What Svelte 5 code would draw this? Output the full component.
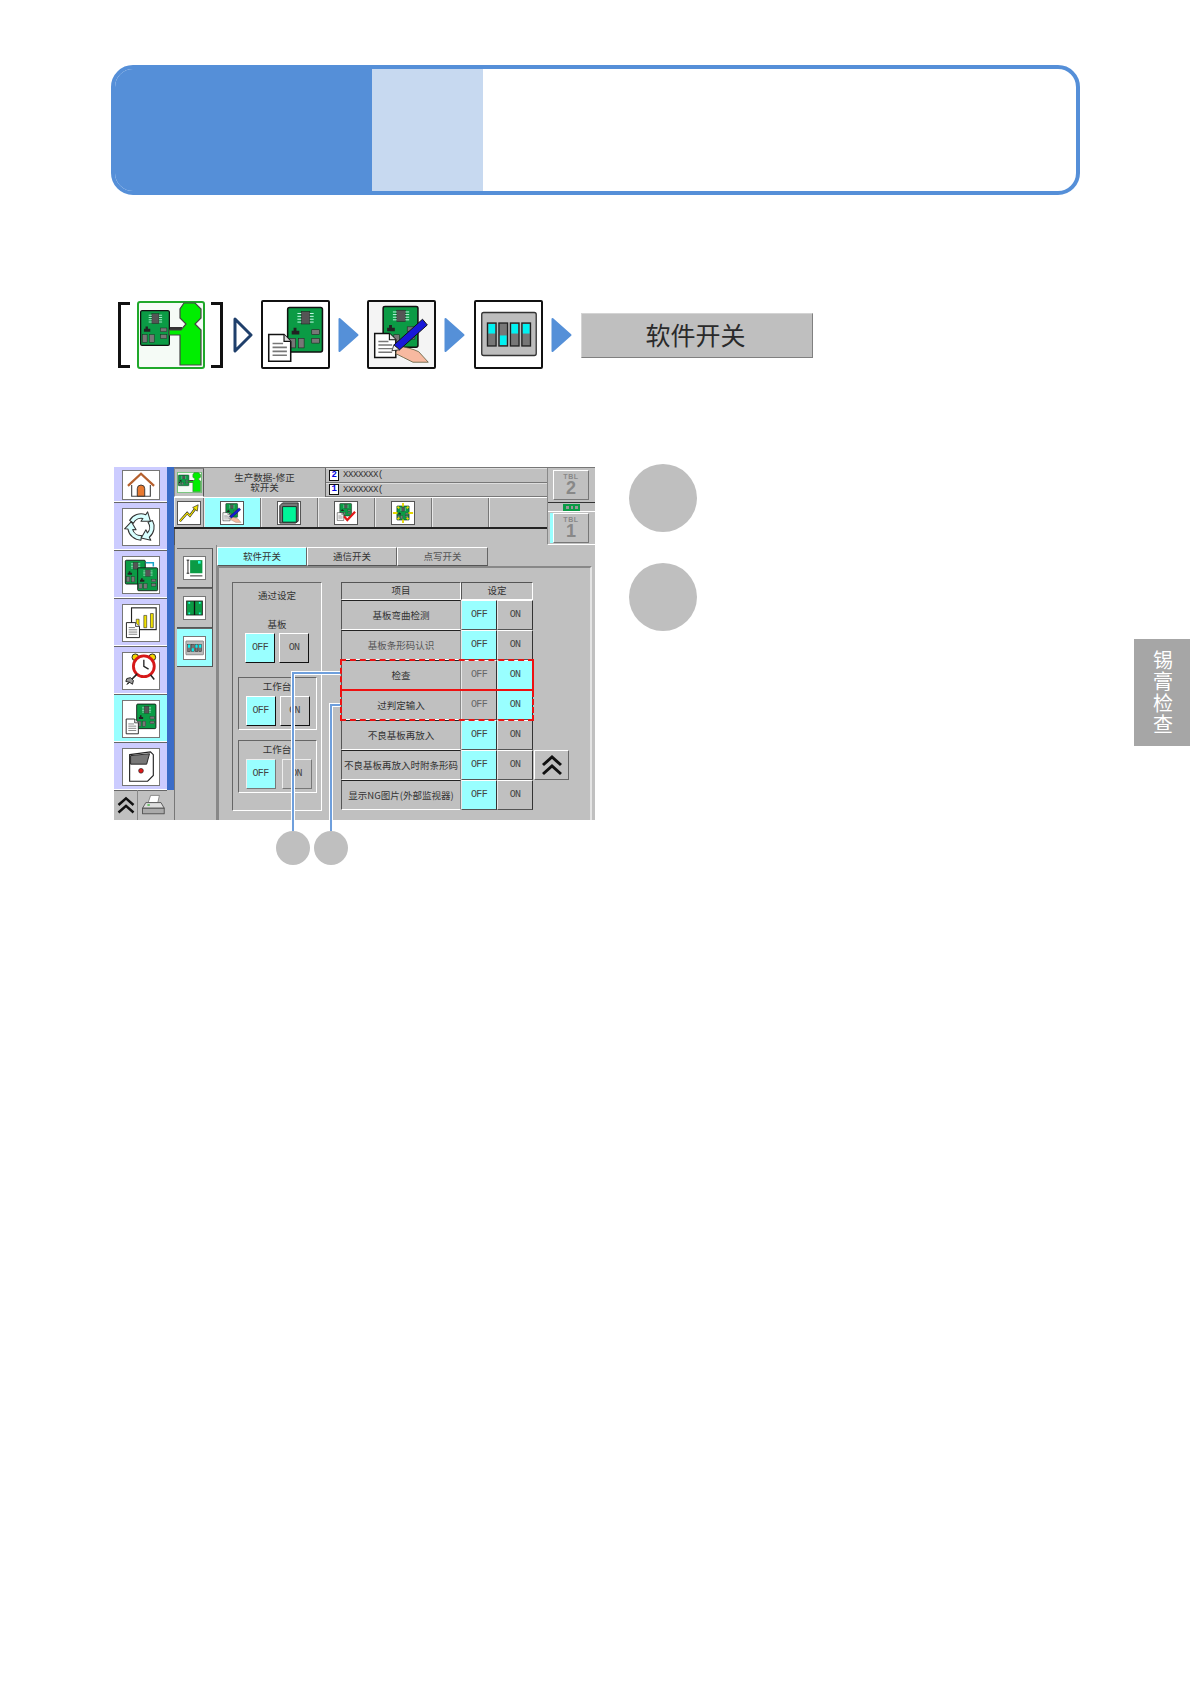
<script>
	const crumbIcons = ['boardDoc', 'edit', 'switches'];

	const rows = [
		{ label: '基板弯曲检测', on: false },
		{ label: '基板条形码认识', on: false },
		{ label: '检查', on: true },
		{ label: '过判定输入', on: true },
		{ label: '不良基板再放入', on: false },
		{ label: '不良基板再放入时附条形码', on: false },
		{ label: '显示NG图片(外部监视器)', on: false }
	];

	const tabs = ['软件开关', '通信开关', '点写开关'];
</script>

{#snippet board(x, y, w, h)}
	<g transform="translate({x} {y}) scale({w / 38} {h / 48})">
		<rect x="0.8" y="0.8" width="36.4" height="46.4" rx="2" fill="#0b9b45" stroke="#111" stroke-width="1.6" />
		<rect x="15" y="5" width="9" height="13" fill="#555" stroke="#222" stroke-width="0.6" />
		<path d="M11 7h4M11 10h4M11 13h4M11 16h4M24 7h4M24 10h4M24 13h4M24 16h4" stroke="#cfe" stroke-width="1" />
		<path d="M7 22h3v3h3v4h-8v-4h2z" fill="#222" />
		<rect x="3" y="33" width="6" height="10" fill="#777" stroke="#222" stroke-width="0.6" />
		<rect x="12" y="33" width="6" height="10" fill="#777" stroke="#222" stroke-width="0.6" />
		<rect x="26" y="24" width="8" height="5" fill="#777" stroke="#222" stroke-width="0.6" />
		<rect x="26" y="33" width="8" height="5" fill="#777" stroke="#222" stroke-width="0.6" />
	</g>
{/snippet}

{#snippet doc(x, y, w, h)}
	<g transform="translate({x} {y}) scale({w / 25} {h / 29})">
		<path d="M1 1h16l7 7v20h-23z" fill="#fff" stroke="#111" stroke-width="1.6" />
		<path d="M17 1v7h7" fill="#ddd" stroke="#111" stroke-width="1.2" />
		<path d="M5 10h11M5 14h15M5 18h15M5 22h15" stroke="#777" stroke-width="1.6" />
	</g>
{/snippet}

{#snippet personBoard()}
	<rect x="1" y="1" width="66" height="66" rx="2" fill="#f5fbf6" stroke="#1fa82a" stroke-width="2" />
	{@render board(3, 9, 30, 36)}
	<path d="M33 26h12v8h-12z" fill="#333" />
	<path d="M47 2h11l6 6v9l-6 6 6 6v35h-21v-30h-11v-5h12l5-6-6-6v-9z" fill="#00ee00" stroke="#444" stroke-width="1.2" />
{/snippet}

{#snippet boardDoc()}
	{@render board(25, 5, 38, 48)}
	{@render doc(5, 33, 25, 30)}
{/snippet}

{#snippet edit()}
	{@render board(14, 4, 38, 44)}
	{@render doc(5, 32, 24, 27)}
	<path d="M30 46c8 1 16 3 22 6l10 11h-16l-10-5-8-4z" fill="#f7b9a0" stroke="#553" stroke-width="0.8" />
	<path d="M56 18l5 6-29 26-6-5z" fill="#1818d8" stroke="#111" stroke-width="1" />
	<path d="M26 45l6 5-8 1z" fill="#eee" stroke="#111" stroke-width="0.8" />
{/snippet}

{#snippet switches()}
	<rect x="6" y="11" width="57" height="45" rx="2" fill="#bdbdbd" stroke="#333" stroke-width="1.4" />
	{#each [0, 1, 2, 3] as i}
		<rect x={12 + i * 12} y="22" width="9" height="24" fill="#777" stroke="#222" stroke-width="1.4" />
		<rect x={13 + i * 12} y={i === 1 ? 35 : 23} width="7" height="10" fill="#00f2f2" />
	{/each}
{/snippet}

{#snippet swirl(angle)}
	<g transform="rotate({angle} 19 19)">
		<path d="M7 12A14 14 0 0 1 24 6l2-3 3 10-10 0 2-3a9 9 0 0 0-10 5z" fill="#d8ffff" stroke="#333" stroke-width="1.100" stroke-linejoin="round" />
	</g>
{/snippet}

{#snippet chevrons(color = '#111')}
	<svg class="chev" viewBox="0 0 24 24" aria-hidden="true">
		<path d="M3 12l9-8 9 8M3 21l9-8 9 8" fill="none" stroke={color} stroke-width="3" />
	</svg>
{/snippet}

<div class="page">
	<div class="banner">
		<div class="banner-dark"></div>
		<div class="banner-light"></div>
	</div>

	<div class="crumbs">
		<span class="bracket"></span>
		<svg class="crumb" viewBox="0 0 68 68" aria-hidden="true">{@render personBoard()}</svg>
		<span class="bracket right"></span>
		<svg class="arrow first" viewBox="0 0 21 36" aria-hidden="true"><path d="M2 2l16 16-16 16z" fill="#fff" stroke="#1f3f6b" stroke-width="3" stroke-linejoin="round" /></svg>
		{#each crumbIcons as name}
			<div class="crumb framed" class:grey={name === 'edit'} class:last={name === 'switches'}>
				<svg viewBox="0 0 68 68" aria-hidden="true">
					{#if name === 'boardDoc'}{@render boardDoc()}{:else if name === 'edit'}{@render edit()}{:else}{@render switches()}{/if}
				</svg>
			</div>
			<svg class="arrow" viewBox="0 0 21 36" aria-hidden="true"><path d="M1.5 2l18 16-18 16z" fill="#5590d8" stroke="#5590d8" stroke-width="2" stroke-linejoin="round" /></svg>
		{/each}
		<div class="crumb-label">软件开关</div>
	</div>

	<div class="figure-row">
		<div class="figure">
			<div class="screen">
				<div class="nav">
					<div class="nav-list">
						<div class="nav-item home">
							<div class="nav-box short">
								<svg viewBox="0 0 38 30" aria-hidden="true">
									<path d="M5 16L19 3l14 13" fill="none" stroke="#b5602d" stroke-width="2.4" />
									<path d="M9 15v12h20V15" fill="#fff" stroke="#444" stroke-width="1.2" />
									<path d="M15 27V19a4 4 0 0 1 8 0v8z" fill="#e8792f" stroke="#333" />
								</svg>
							</div>
						</div>
						<div class="nav-item">
							<div class="nav-box">
								<svg viewBox="0 0 38 38" aria-hidden="true">
									{@render swirl(0)}
									{@render swirl(120)}
									{@render swirl(240)}
								</svg>
							</div>
						</div>
						<div class="nav-item">
							<div class="nav-box">
								<svg viewBox="0 0 38 38" aria-hidden="true">
									{@render board(2, 3, 22, 26)}
									{@render board(15, 11, 22, 25)}
									<path d="M24 6h8v4" fill="none" stroke="#1aa7c9" stroke-width="1.6" />
								</svg>
							</div>
						</div>
						<div class="nav-item">
							<div class="nav-box">
								<svg viewBox="0 0 38 38" aria-hidden="true">
									<rect x="9" y="3" width="26" height="23" fill="#fff" stroke="#222" stroke-width="1.2" />
									<path d="M14 24V15h3v9zM22 24V11h3v13zM29 24V9h3v15z" fill="#f2e200" stroke="#222" stroke-width="0.6" />
									{@render doc(3, 18, 15, 17)}
								</svg>
							</div>
						</div>
						<div class="nav-item">
							<div class="nav-box">
								<svg viewBox="0 0 38 38" aria-hidden="true">
									<circle cx="13" cy="4.500" r="3.500" fill="#f2d400" stroke="#222" />
									<circle cx="31" cy="4.500" r="3.500" fill="#f2d400" stroke="#222" />
									<circle cx="22" cy="14" r="11" fill="#fff" stroke="#d61818" stroke-width="3" />
									<path d="M22 7v7l5 3" fill="none" stroke="#222" stroke-width="1.4" />
									<path d="M15 22L8 29M29 23l4 5" stroke="#222" stroke-width="1.6" />
									<path d="M4 27l4-1 3 3-1 4-3-2-3 2 3-2-4-1z" fill="#999" stroke="#222" />
								</svg>
							</div>
						</div>
						<div class="nav-item active">
							<div class="nav-box">
								<svg viewBox="0 0 68 68" aria-hidden="true">{@render boardDoc()}</svg>
							</div>
						</div>
						<div class="nav-item">
							<div class="nav-box">
								<svg viewBox="0 0 38 38" aria-hidden="true">
									<path d="M7 6l22-3 3 3v22l-6 6H7z" fill="#fff" stroke="#222" stroke-width="1.2" />
									<path d="M8 7l20-2-3 11H8z" fill="#777" stroke="#222" />
									<circle cx="19" cy="23" r="2.500" fill="#e01818" stroke="#222" stroke-width="0.7" />
								</svg>
							</div>
						</div>
					</div>
					<div class="nav-foot">
						<div class="foot-scroll">{@render chevrons()}</div>
						<div class="foot-print">
							<svg viewBox="0 0 30 26" aria-hidden="true">
								<path d="M12 1h11l-2 9H9z" fill="#fff" stroke="#777" />
								<path d="M6 10h19l4 7H2z" fill="#ddd" stroke="#444" />
								<rect x="2" y="17" width="27" height="7" fill="#aaa" stroke="#444" />
								<path d="M8 13h3" stroke="#2a2" stroke-width="1.500" />
							</svg>
						</div>
					</div>
				</div>

				<div class="main">
					<div class="top">
						<div class="top-left">
							<div class="title-row">
								<div class="title-icon">
									<svg viewBox="0 0 68 68" preserveAspectRatio="none" aria-hidden="true">{@render personBoard()}</svg>
								</div>
								<div class="title-text">生产数据-修正<br />软开关</div>
								<div class="files">
									<div class="file"><b>2</b><span>XXXXXXX(</span></div>
									<div class="file"><b>1</b><span>XXXXXXX(</span></div>
								</div>
							</div>
							<div class="tool-row">
								<div class="tool graph">
									<svg class="tool-box" viewBox="0 0 24 24" aria-hidden="true">
										<path d="M2 21l8-9 3 3 6-8" fill="none" stroke="#222" stroke-width="2.600" />
										<path d="M2 21l8-9 3 3 6-8" fill="none" stroke="#f4e400" stroke-width="1.300" />
										<path d="M22 3l-1 7-5-4z" fill="#f4e400" stroke="#222" stroke-width="0.7" />
									</svg>
								</div>
								<div class="tool active">
									<svg class="tool-box" viewBox="0 0 68 68" aria-hidden="true">{@render edit()}</svg>
								</div>
								<div class="tool">
									<svg class="tool-box" viewBox="0 0 24 24" aria-hidden="true">
										<path d="M2 4l3-3h17v20l-3 2H2z" fill="#777" stroke="#222" />
										<path d="M5 5h15v17H5z" fill="#00f598" stroke="#222" />
									</svg>
								</div>
								<div class="tool">
									<svg class="tool-box" viewBox="0 0 68 68" aria-hidden="true">
										{@render board(14, 4, 38, 40)}
										{@render doc(6, 32, 22, 26)}
										<path d="M28 44l10 12 24-26" fill="none" stroke="#e01818" stroke-width="7" />
									</svg>
								</div>
								<div class="tool">
									<svg class="tool-box" viewBox="0 0 24 24" aria-hidden="true">
										{@render board(5, 4, 14, 16)}
										<path d="M12 1v4M12 19v4M1 12h5M18 12h5M6 5l2 2M18 5l-2 2M6 19l2-2M18 19l-2-2" stroke="#e6d800" stroke-width="2" />
									</svg>
								</div>
								<div class="tool"></div>
								<div class="tool last"></div>
							</div>
							<div class="band"></div>
						</div>
						<div class="tbl-col">
							<div class="tbl"><small>TBL</small><strong>2</strong></div>
							<div class="tbl-strip"><svg viewBox="0 0 17 7" aria-hidden="true"><rect width="17" height="7" fill="#0b9b45" /><path d="M3 2h3v3H3zM8 2h2v3H8zM12 2h3v3h-3z" fill="#999" /></svg></div>
							<div class="tbl-wrap">
								<div class="tbl"><small>TBL</small><strong>1</strong></div>
							</div>
						</div>
					</div>

					<div class="body">
						<div class="side">
							<div class="side-tab">
								<svg class="side-box" viewBox="0 0 24 24" aria-hidden="true">
									<rect x="7" y="3" width="14" height="15" fill="#0b9b45" />
									<rect x="16" y="4" width="3" height="3" fill="#2fd" />
									<path d="M3 3h3M4.500 3v15M3 18h3M7 21h14" stroke="#111" />
								</svg>
							</div>
							<div class="side-tab">
								<svg class="side-box" viewBox="0 0 24 24" aria-hidden="true">
									<rect x="3" y="4" width="18" height="16" fill="#0b9b45" stroke="#222" />
									<path d="M12 4v16" stroke="#111" stroke-width="1.500" />
									<path d="M5 5h2v2H5zM17 5h2v2h-2zM5 17h2v2H5zM17 17h2v2h-2z" fill="#2fd" />
								</svg>
							</div>
							<div class="side-tab active">
								<svg class="side-box" viewBox="0 0 68 68" aria-hidden="true">{@render switches()}</svg>
							</div>
						</div>

						<div class="content">
							<div class="tabs">
								{#each tabs as tab, i}
									<div class="tab" class:active={i === 0} class:dim={i === 2}>{tab}</div>
								{/each}
							</div>
							<div class="panel">
								<div class="pass">
									<div class="pass-title">通过设定</div>
									<div class="pass-sub">基板</div>
									<div class="btns">
										<div class="btn on">OFF</div>
										<div class="btn">ON</div>
									</div>
									<div class="stage">
										<div class="stage-title">工作台</div>
										<div class="btns">
											<div class="btn on">OFF</div>
											<div class="btn">ON</div>
										</div>
									</div>
									<div class="stage">
										<div class="stage-title">工作台</div>
										<div class="btns wide">
											<div class="btn on soft">OFF</div>
											<div class="btn soft">ON</div>
										</div>
									</div>
								</div>

								<div class="table">
									<div class="head c1">项目</div>
									<div class="head set">设定</div>
									{#each rows as row, i}
										<div class="label c1" class:dim={i === 1} style="grid-row:{i + 2}">{row.label}</div>
										<div class="cell c2" class:on={!row.on} class:dim={row.on} style="grid-row:{i + 2}">OFF</div>
										<div class="cell c3" class:on={row.on} style="grid-row:{i + 2}">ON</div>
									{/each}
									<div class="hl upper"></div>
									<div class="hl lower"></div>
									<div class="scroll-up">{@render chevrons()}</div>
								</div>
							</div>
						</div>
					</div>
				</div>
			</div>

			<svg class="callouts" viewBox="0 0 481 400" aria-hidden="true">
				<g fill="none">
					<path d="M179 364V206h47M217 364V238h9" stroke="#fff" stroke-width="4" />
					<path d="M179 364V206h47M217 364V238h9" stroke="#6f9fdc" stroke-width="2" />
				</g>
				<circle cx="179" cy="381" r="17" fill="#bfbfbf" />
				<circle cx="217" cy="381" r="17" fill="#bfbfbf" />
			</svg>
		</div>

		<div class="steps">
			<div class="step"></div>
			<div class="step"></div>
		</div>
	</div>

	<div class="side-label">锡膏检查</div>
</div>

<style>
	:global(body) {
		margin: 0;
		background: #fff;
	}

	* {
		box-sizing: border-box;
	}

	.page {
		position: relative;
		width: 1190px;
		height: 1684px;
		padding-top: 65px;
		overflow: hidden;
		font-family: "Noto Sans CJK SC", "Liberation Sans", sans-serif;
		color: #222;
	}

	.banner {
		display: flex;
		width: 969px;
		height: 130px;
		margin-left: 111px;
		border: 4px solid #558fd8;
		border-radius: 22px;
		overflow: hidden;
	}

	.banner-dark {
		width: 257px;
		background: #558fd8;
	}

	.banner-light {
		width: 111px;
		background: #c7d9f0;
	}

	.crumbs {
		display: flex;
		align-items: center;
		gap: 8px;
		height: 69px;
		margin: 105px 0 0 118px;
	}

	.bracket {
		width: 12px;
		height: 66px;
		margin-right: -1px;
		border: 3px solid #111;
		border-right: none;
	}

	.bracket.right {
		margin: 0 2px 0 -2px;
		border: 3px solid #111;
		border-left: none;
	}

	.crumb {
		flex: none;
		width: 68px;
		height: 68px;
	}

	.crumb svg {
		display: block;
		width: 100%;
		height: 100%;
	}

	.framed {
		width: 69px;
		height: 69px;
		background: #fff;
		border: 2px solid #111;
		border-radius: 2px;
	}

	.framed.grey {
		background: #f4f4f4;
	}

	.framed.last {
		margin-left: 1px;
	}

	.arrow {
		flex: none;
		width: 21px;
		height: 36px;
	}

	.arrow.first {
		margin-right: -1px;
	}

	.crumb-label {
		width: 232px;
		height: 45px;
		margin: 2px 0 0 1px;
		padding-right: 3px;
		background: #bfbfbf;
		border: 1px solid;
		border-color: #d4d4d4 #808080 #808080 #d4d4d4;
		font-size: 25px;
		line-height: 40px;
		text-align: center;
		color: #2a2a2a;
	}

	.figure-row {
		display: flex;
		margin: 98px 0 0 114px;
	}

	.figure {
		position: relative;
		width: 481px;
		height: 353px;
	}

	.callouts {
		position: absolute;
		left: 0;
		top: 0;
		width: 481px;
		height: 400px;
		pointer-events: none;
	}

	.steps {
		display: flex;
		flex-direction: column;
		gap: 31px;
		margin: -3px 0 0 34px;
	}

	.step {
		width: 68px;
		height: 68px;
		border-radius: 50%;
		background: #bfbfbf;
	}

	.side-label {
		position: absolute;
		right: 0;
		top: 639px;
		width: 56px;
		height: 107px;
		display: flex;
		align-items: center;
		justify-content: center;
		padding-left: 2px;
		background: #a6a6a6;
		color: #fff;
		font-size: 20px;
		letter-spacing: 1.5px;
		writing-mode: vertical-rl;
	}

	.screen {
		display: flex;
		width: 481px;
		height: 353px;
		background: #c0c0c0;
		font-size: 9.5px;
		line-height: 10px;
		color: #333;
	}

	.nav {
		display: flex;
		flex-direction: column;
		width: 60px;
	}

	.nav-list {
		height: 323px;
		background: #ccccff;
		border-right: 7px solid #3a6cc8;
	}

	.nav-item {
		display: flex;
		align-items: center;
		justify-content: center;
		height: 48px;
		border-bottom: 1px solid #666;
		box-shadow: inset 0 -1px 0 #fff;
	}

	.nav-item.home {
		height: 36px;
	}

	.nav-item.active {
		background: #99ffff;
	}

	.nav-box {
		width: 38px;
		height: 38px;
		background: #fff;
		border: 1px solid #777;
	}

	.nav-box.short {
		height: 30px;
	}

	.nav-box svg {
		display: block;
		width: 100%;
		height: 100%;
	}

	.nav-foot {
		display: flex;
		height: 30px;
	}

	.foot-scroll {
		display: flex;
		align-items: center;
		justify-content: center;
		width: 24px;
		border-right: 1px solid #888;
	}

	.foot-scroll .chev {
		width: 20px;
		height: 20px;
	}

	.foot-print {
		display: flex;
		align-items: center;
		justify-content: center;
		width: 30px;
	}

	.foot-print svg {
		width: 24px;
		height: 22px;
	}

	.main {
		display: flex;
		flex-direction: column;
		width: 421px;
	}

	.top {
		display: flex;
		height: 78px;
		border-top: 1px solid #777;
	}

	.top-left {
		width: 373px;
	}

	.title-row {
		display: flex;
		height: 29px;
	}

	.title-icon {
		display: flex;
		align-items: center;
		justify-content: center;
		width: 30px;
		border: 1px solid;
		border-color: #888 #555 #fff #888;
	}

	.title-icon svg {
		width: 25px;
		height: 21px;
	}

	.title-text {
		width: 121px;
		padding-top: 4px;
		line-height: 10px;
		text-align: center;
	}

	.files {
		flex: 1;
		display: flex;
		flex-direction: column;
		border-left: 1px solid #666;
	}

	.file {
		display: flex;
		align-items: center;
		gap: 4px;
		height: 15px;
		padding-left: 3px;
		border-bottom: 1px solid #777;
		border-top: 1px solid #ddd;
		font-family: "Liberation Mono", monospace;
		font-size: 9px;
		letter-spacing: -0.4px;
	}

	.file b {
		width: 10px;
		height: 11px;
		background: #fff;
		border: 1px solid #111;
		color: #0000e0;
		font-size: 9px;
		line-height: 9px;
		text-align: center;
	}

	.tool-row {
		display: flex;
		height: 32px;
		border-top: 1px solid #fff;
		border-bottom: 2px solid #222;
	}

	.tool {
		display: flex;
		align-items: center;
		justify-content: center;
		width: 57px;
		border-right: 1px solid #777;
		box-shadow: inset 1px 0 0 #e8e8e8;
	}

	.tool.graph {
		width: 30px;
	}

	.tool.last {
		flex: 1;
		border-right: none;
	}

	.tool.active {
		background: #99ffff;
	}

	.tool-box {
		width: 24px;
		height: 24px;
		background: #fff;
		border: 1px solid #555;
	}

	.band {
		height: 16px;
		border-left: 1px solid #555;
	}

	.tbl-col {
		flex: 1;
		display: flex;
		flex-direction: column;
		align-items: stretch;
		padding-top: 2px;
		border-left: 1px solid #888;
		border-bottom: 1px solid #fff;
	}

	.tbl {
		display: flex;
		flex-direction: column;
		align-items: center;
		width: 36px;
		height: 30px;
		margin-left: 5px;
		padding-top: 2px;
		border: 1px solid;
		border-color: #fff #777 #777 #fff;
		color: #888;
		font-family: "Liberation Sans", sans-serif;
	}

	.tbl small {
		font-size: 7px;
		line-height: 7px;
		font-weight: 700;
		letter-spacing: 0.6px;
	}

	.tbl strong {
		font-size: 18px;
		line-height: 17px;
	}

	.tbl-strip {
		display: flex;
		justify-content: center;
		height: 10px;
		margin: 2px 0 1px;
		padding: 1px 0;
		border-top: 1px solid #333;
		border-bottom: 1px solid #fff;
	}

	.tbl-strip svg {
		width: 17px;
		height: 7px;
	}

	.tbl-wrap {
		margin-left: 2px;
		border-left: 3px solid #99ffff;
	}

	.tbl-wrap .tbl {
		margin-left: 0;
	}

	.body {
		flex: 1;
		display: flex;
	}

	.side {
		width: 43px;
		padding: 3px 3px 0 2px;
		border-left: 1px solid #777;
		border-right: 1px solid #888;
	}

	.side-tab {
		display: flex;
		align-items: center;
		justify-content: center;
		height: 40px;
		border-top: 1px solid #666;
		border-right: 1px solid #555;
		border-bottom: 1px solid #555;
	}

	.side-tab.active {
		height: 39px;
		background: #99ffff;
	}

	.side-box {
		width: 23px;
		height: 24px;
		background: #fff;
		border: 1px solid #777;
	}

	.content {
		flex: 1;
		min-width: 0;
	}

	.tabs {
		display: flex;
		height: 21px;
		padding-top: 2px;
	}

	.tab {
		width: 90px;
		border: 1px solid;
		border-color: #fff #666 #555 #fff;
		line-height: 17px;
		text-align: center;
	}

	.tab.active {
		background: #99ffff;
	}

	.tab.dim {
		width: 91px;
		color: #555;
	}

	.panel {
		display: flex;
		align-items: flex-start;
		width: 375px;
		height: 254px;
		padding: 14px 0 0 13px;
		border: 2px solid;
		border-color: #888 #e4e4e4 transparent #888;
		border-bottom: none;
	}

	.pass {
		display: flex;
		flex-direction: column;
		align-items: center;
		width: 90px;
		height: 229px;
		padding-top: 5px;
		border: 1px solid;
		border-color: #666 #fff #fff #666;
	}

	.pass-title,
	.pass-sub,
	.stage-title {
		line-height: 14px;
		text-align: center;
	}

	.pass-sub {
		margin-top: 15px;
	}

	.btns {
		display: flex;
		gap: 4px;
		margin-top: 2px;
	}

	.btns.wide {
		gap: 6px;
	}

	.btn,
	.cell {
		font-family: "Liberation Mono", monospace;
		font-size: 10px;
		letter-spacing: -0.7px;
		color: #444;
	}

	.btn {
		width: 30px;
		height: 30px;
		border: 1px solid;
		border-color: #fff #111 #111 #fff;
		line-height: 28px;
		text-align: center;
	}

	.btn.on {
		background: #99ffff;
	}

	.btn.soft {
		border-color: #eee #777 #777 #eee;
	}

	.stage {
		width: 79px;
		height: 53px;
		margin-top: 10px;
		padding: 1px 0 0 7px;
		border: 1px solid;
		border-color: #666 #fff #fff #666;
	}

	.pass > .btns + .stage {
		margin-top: 14px;
	}

	.stage-title {
		margin: 0 0 3px -7px;
	}

	.table {
		display: grid;
		grid-template-columns: 120px 36px 36px 36px;
		grid-template-rows: 18px repeat(7, 30px);
		margin-left: 19px;
	}

	.c1 {
		grid-column: 1;
	}

	.c2 {
		grid-column: 2;
	}

	.c3 {
		grid-column: 3;
	}

	.head {
		grid-row: 1;
		border: 1px solid;
		border-color: #555 #fff #fff #555;
		line-height: 15px;
		text-align: center;
	}

	.head.set {
		grid-column: 2 / 4;
	}

	.label {
		display: flex;
		align-items: center;
		justify-content: center;
		border: 1px solid;
		border-color: #222 #888 #fff #555;
		white-space: nowrap;
	}

	.label.dim {
		color: #555;
	}

	.cell {
		display: flex;
		align-items: center;
		justify-content: center;
		border: 1px solid;
		border-color: #fff #333 #555 #e8e8e8;
	}

	.cell.on {
		background: #99ffff;
	}

	.cell.dim {
		color: #666;
	}

	.hl {
		grid-column: 1 / 4;
		margin: -1px;
		border: 2px dashed #ee1111;
	}

	.hl.upper {
		grid-row: 4;
		border-right-style: solid;
		border-bottom-style: solid;
	}

	.hl.lower {
		grid-row: 5;
		border-top: none;
		margin-top: 1px;
	}

	.scroll-up {
		grid-column: 4;
		grid-row: 7;
		display: flex;
		align-items: center;
		justify-content: center;
		margin-left: 1px;
		border: 1px solid;
		border-color: #fff #666 #666 #fff;
	}

	.scroll-up .chev {
		width: 24px;
		height: 24px;
	}
</style>
